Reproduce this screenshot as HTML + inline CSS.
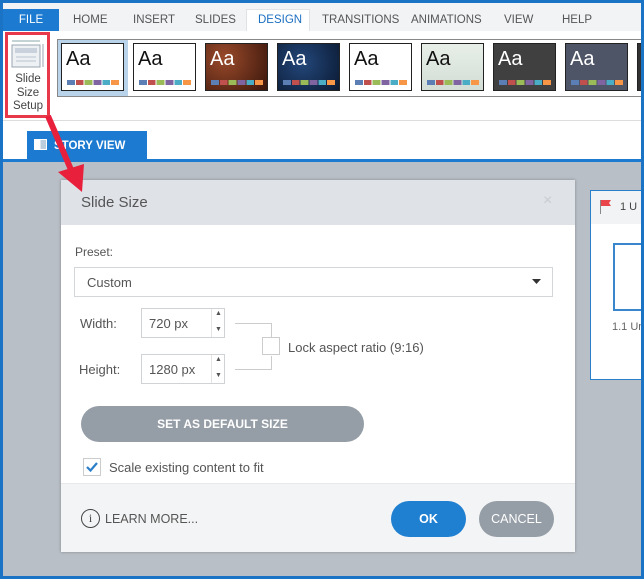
<!DOCTYPE html>
<html><head><meta charset="utf-8"><style>
*{margin:0;padding:0;box-sizing:border-box}
body{width:644px;height:579px;position:relative;overflow:hidden;font-family:"Liberation Sans",sans-serif;background:#1a73c4}
.abs{position:absolute;white-space:nowrap}
.tab{position:absolute;top:14px;font-size:11.5px;color:#555}
.th{position:absolute;top:43px;width:63px;height:48px;border:1px solid #222}
.th span{position:absolute;left:4px;top:4px;font-size:20px;color:#111}
.th i{position:absolute;left:5px;top:36px;width:52px;height:5px;background:linear-gradient(90deg,#5b7fb5 0 15%,transparent 15% 17%,#c0504d 17% 32%,transparent 32% 34%,#9bbb59 34% 49%,transparent 49% 51%,#8064a2 51% 66%,transparent 66% 68%,#4bacc6 68% 83%,transparent 83% 85%,#f79646 85% 100%)}
.lbl{position:absolute;font-size:13px;color:#555;white-space:nowrap}
</style></head><body>
<div class="abs" style="left:3px;top:3px;width:638px;height:28px;background:#f1f3f5"></div>
<div class="abs" style="left:3px;top:9px;width:56px;height:23px;background:#1c7bd1;color:#fff;font-size:11.5px;text-align:center;line-height:23px">FILE</div>
<div class="abs" style="left:246px;top:9px;width:64px;height:23px;background:#fff;border:1px solid #e0e3e6;border-bottom:none"></div>
<div class="tab" style="left:73px">HOME</div>
<div class="tab" style="left:133px">INSERT</div>
<div class="tab" style="left:195px">SLIDES</div>
<div class="tab" style="left:258px;color:#1c6fc0">DESIGN</div>
<div class="tab" style="left:322px">TRANSITIONS</div>
<div class="tab" style="left:411px">ANIMATIONS</div>
<div class="tab" style="left:504px">VIEW</div>
<div class="tab" style="left:562px">HELP</div>
<div class="abs" style="left:3px;top:31px;width:638px;height:128px;background:#fff"></div>
<div class="abs" style="left:57px;top:39px;width:590px;height:58px;border:1px solid #888;border-right:none"></div>
<div class="abs" style="left:58px;top:40px;width:70px;height:56px;background:#b9d3ea"></div>
<div class="th" style="left:61px;background:#fff"><span>Aa</span><i></i></div>
<div class="th" style="left:133px;background:#fff"><span>Aa</span><i></i></div>
<div class="th" style="left:205px;background:radial-gradient(circle at 30% 30%,#9a4a2a,#3a160c)"><span style="color:#fff">Aa</span><i></i></div>
<div class="th" style="left:277px;background:radial-gradient(circle at 40% 40%,#23477a,#0b1a33)"><span style="color:#fff">Aa</span><i></i></div>
<div class="th" style="left:349px;background:#fff"><span>Aa</span><i></i></div>
<div class="th" style="left:421px;background:linear-gradient(#e8efe9,#d2ddd5)"><span>Aa</span><i></i></div>
<div class="th" style="left:493px;background:#404040"><span style="color:#fff">Aa</span><i></i></div>
<div class="th" style="left:565px;background:#4d5566"><span style="color:#fff">Aa</span><i></i></div>
<div class="th" style="left:637px;background:#333"></div>
<div class="abs" style="left:3px;top:120px;width:638px;height:1px;background:#ddd"></div>
<div class="abs" style="left:5px;top:32px;width:45px;height:86px;border:3px solid #e8394a"></div>
<svg class="abs" style="left:10px;top:38px" width="36" height="32"><line x1="2" y1="3" x2="30" y2="3" stroke="#8aa" stroke-width="1"/><rect x="2" y="7" width="28" height="22" fill="#eef1f4" stroke="#9aa6b2"/><rect x="5" y="10" width="22" height="5" fill="#c9d2dc"/><line x1="6" y1="19" x2="26" y2="19" stroke="#b8c3cf"/><line x1="6" y1="23" x2="26" y2="23" stroke="#b8c3cf"/><line x1="33" y1="6" x2="33" y2="29" stroke="#9aa6b2"/></svg>
<div class="abs" style="left:8px;top:73px;width:40px;text-align:center;font-size:11.5px;color:#444;line-height:13.5px">Slide<br>Size<br>Setup</div>
<div class="abs" style="left:3px;top:159px;width:638px;height:3px;background:#1c7bd1"></div>
<div class="abs" style="left:27px;top:131px;width:120px;height:29px;background:#1c7bd1"></div>
<div class="abs" style="left:34px;top:139px;width:13px;height:11px;border:1px solid #fff;background:linear-gradient(90deg,#fff 0 50%,#bcd 50%)"></div>
<div class="abs" style="left:54px;top:140px;font-size:11.5px;color:#fff;font-weight:bold">STORY VIEW</div>
<div class="abs" style="left:3px;top:162px;width:638px;height:414px;background:#b9bfc6"></div>
<div class="abs" style="left:590px;top:190px;width:51px;height:190px;background:#fff;border:1px solid #2b7fc9;border-right:none"></div>
<div class="abs" style="left:591px;top:191px;width:50px;height:33px;background:#f2f3f4"></div>
<svg class="abs" style="left:599px;top:199px" width="14" height="16"><line x1="1.5" y1="1" x2="1.5" y2="15" stroke="#888"/><path d="M2 1h10l-2 3 2 3H2z" fill="#e8444a"/></svg>
<div class="abs" style="left:620px;top:201px;font-size:11px;color:#444">1 U</div>
<div class="abs" style="left:613px;top:243px;width:30px;height:68px;border:2px solid #3a86cc;border-right:none;background:#fff"></div>
<div class="abs" style="left:612px;top:321px;font-size:11px;color:#666">1.1 Un</div>
<div class="abs" style="left:641px;top:0;width:3px;height:579px;background:#1a73c4"></div>
<div class="abs" style="left:61px;top:180px;width:514px;height:372px;background:#fff;box-shadow:0 0 3px rgba(0,0,0,.3)"></div>
<div class="abs" style="left:61px;top:180px;width:514px;height:45px;background:#dfe3e8"></div>
<div class="abs" style="left:81px;top:194px;font-size:15px;color:#555">Slide Size</div>
<div class="abs" style="left:543px;top:192px;font-size:16px;color:#c7ccd1">×</div>
<div class="lbl" style="left:75px;top:245px;font-size:12px">Preset:</div>
<div class="abs" style="left:74px;top:267px;width:479px;height:30px;border:1px solid #d4d7da"></div>
<div class="lbl" style="left:87px;top:275px">Custom</div>
<svg class="abs" style="left:532px;top:279px" width="10" height="6"><path d="M0 0h9l-4.5 5z" fill="#333"/></svg>
<div class="lbl" style="left:80px;top:316px">Width:</div>
<div class="lbl" style="left:79px;top:362px">Height:</div>
<div class="abs" style="left:141px;top:308px;width:84px;height:30px;border:1px solid #d0d3d6"></div>
<div class="abs" style="left:211px;top:309px;width:1px;height:28px;background:#e2e4e6"></div>
<div class="lbl" style="left:149px;top:316px">720 px</div>
<div class="abs" style="left:141px;top:354px;width:84px;height:30px;border:1px solid #d0d3d6"></div>
<div class="abs" style="left:211px;top:355px;width:1px;height:28px;background:#e2e4e6"></div>
<div class="lbl" style="left:149px;top:362px">1280 px</div>
<div class="abs" style="left:215px;top:310px;font-size:7px;color:#555">▲</div>
<div class="abs" style="left:215px;top:326px;font-size:7px;color:#555">▼</div>
<div class="abs" style="left:215px;top:356px;font-size:7px;color:#555">▲</div>
<div class="abs" style="left:215px;top:372px;font-size:7px;color:#555">▼</div>
<div class="abs" style="left:235px;top:323px;width:37px;height:14px;border-top:1px solid #ccc;border-right:1px solid #ccc"></div>
<div class="abs" style="left:235px;top:356px;width:37px;height:14px;border-bottom:1px solid #ccc;border-right:1px solid #ccc"></div>
<div class="abs" style="left:262px;top:337px;width:18px;height:18px;border:1px solid #ccc;background:#fff"></div>
<div class="lbl" style="left:288px;top:340px">Lock aspect ratio (9:16)</div>
<div class="abs" style="left:81px;top:406px;width:283px;height:36px;border-radius:18px;background:#959da6;color:#fff;font-size:12px;font-weight:bold;text-align:center;line-height:36px">SET AS DEFAULT SIZE</div>
<div class="abs" style="left:83px;top:458px;width:18px;height:18px;border:1px solid #ccc"></div>
<svg class="abs" style="left:85px;top:461px" width="14" height="12"><path d="M2 6l3.5 3.5L12 2" stroke="#2a7fc8" stroke-width="2.2" fill="none"/></svg>
<div class="lbl" style="left:109px;top:460px">Scale existing content to fit</div>
<div class="abs" style="left:61px;top:483px;width:514px;height:69px;background:#f3f4f5;border-top:1px solid #e6e8ea"></div>
<div class="abs" style="left:81px;top:509px;width:19px;height:19px;border:1.5px solid #444;border-radius:50%;font-size:12px;text-align:center;line-height:16px;color:#444;font-family:'Liberation Serif',serif">i</div>
<div class="lbl" style="left:105px;top:512px;font-size:12.5px">LEARN MORE...</div>
<div class="abs" style="left:391px;top:501px;width:75px;height:36px;border-radius:18px;background:#1f80d2;color:#fff;font-size:12.5px;font-weight:bold;text-align:center;line-height:36px">OK</div>
<div class="abs" style="left:479px;top:501px;width:75px;height:36px;border-radius:18px;background:#959da6;color:#fff;font-size:12.5px;text-align:center;line-height:36px">CANCEL</div>
<svg class="abs" style="left:0;top:0" width="644" height="579"><line x1="48" y1="116" x2="72" y2="172" stroke="#e8203c" stroke-width="6"/><path d="M58 172L84 164L82 192z" fill="#e8203c"/></svg>
</body></html>
